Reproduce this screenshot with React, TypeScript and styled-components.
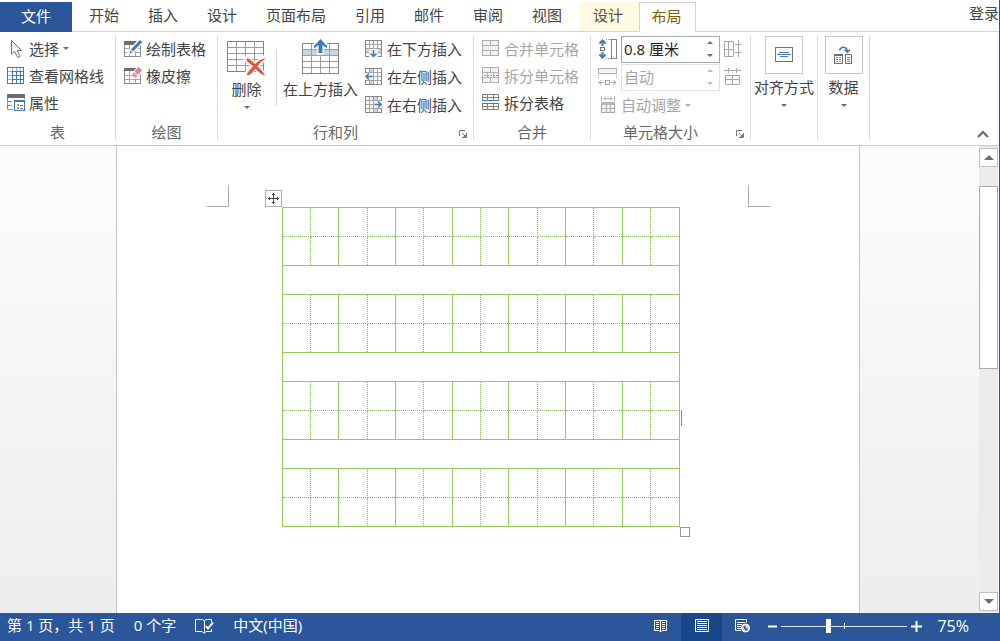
import React from "react";
import styled, { createGlobalStyle, css } from "styled-components";

const color = {
  brand: "#2b579a",
  brandDark: "#19478a",
  text: "#444444",
  label: "#666666",
  disabled: "#a6a6a6",
  line: "#d4d4d4",
  icon: "#6d6d6d",
  iconBlue: "#3f7cb5",
  grid: "#97c95c",
  gridDot: "#8cb868",
};

const GlobalStyle = createGlobalStyle`
  *, *::before, *::after { box-sizing: border-box; }
  body {
    margin: 0;
    font-family: "Open Sans", "Noto Sans CJK SC", sans-serif;
    font-size: 15px;
    line-height: 20px;
    color: ${color.text};
    background: #ffffff;
  }
  button, input { font: inherit; color: inherit; }
  button { padding: 0; border: 0; background: none; white-space: nowrap; }
  svg { display: block; flex: none; }
`;

/* ---------- shell ---------- */

const Window = styled.div`
  display: flex;
  flex-direction: column;
  height: 100vh;
  overflow: hidden;
`;

const Upper = styled.div`
  flex: 1;
  min-height: 0;
  display: flex;
  flex-direction: column;
  border-right: 1px solid ${color.brand};
`;

/* ---------- tabs ---------- */

const TabBar = styled.nav`
  display: flex;
  height: 32px;
  padding-top: 2px;
  border-bottom: 1px solid ${color.line};
`;

const FileTab = styled.button`
  width: 72px;
  height: 30px;
  padding-bottom: 2px;
  color: #ffffff;
  background: ${color.brand};
`;

const TabList = styled.div`
  display: flex;
  gap: 29px;
  padding: 0 18px 0 17px;
`;

const Tab = styled.button`
  padding-bottom: 3px;
`;

const ContextTab = styled.button<{ $active?: boolean }>`
  width: 59px;
  height: 29px;
  padding: 0 3px 3px 0;
  color: #5c5232;
  background: #fef9e3;
  ${(p) =>
    p.$active &&
    css`
      width: 57px;
      height: 30px;
      padding: 0 2px 4px 0;
      color: #806000;
      background: #ffffff;
      border: 1px solid ${color.line};
      border-bottom: 0;
    `}
`;

const SignIn = styled.a`
  margin-left: auto;
  line-height: 22px;
  color: inherit;
  text-decoration: none;
`;

/* ---------- ribbon ---------- */

const Ribbon = styled.div`
  display: grid;
  grid-template-columns: 116px 102px 256px 117px 160px 67px 52px 1fr;
  height: 114px;
  padding: 3px 0 5px;
  border-bottom: 1px solid #c8c8c8;
`;

const Group = styled.section`
  display: flex;
  flex-direction: column;
  justify-content: space-between;
  border-right: 1px solid #dcdcdc;
`;

const GroupBody = styled.div<{ $inset?: number }>`
  display: flex;
  padding-left: ${(p) => p.$inset ?? 8}px;
`;

const GroupFooter = styled.div<{ $launcher?: boolean }>`
  display: flex;
  align-items: center;
  height: 16px;
  padding-right: ${(p) => (p.$launcher ? 6 : 0)}px;
  color: ${color.label};
`;

const GroupLabel = styled.span`
  flex: 1;
  text-align: center;
  line-height: 16px;
`;

const Launcher = styled.button`
  display: flex;
  justify-content: flex-end;
  width: 14px;
  margin-top: 4px;
`;

const Stack = styled.div<{ $row: number }>`
  display: grid;
  grid-auto-rows: ${(p) => p.$row}px;
`;

const Command = styled.button`
  display: flex;
  align-items: center;
  gap: 4px;
  &:disabled {
    color: ${color.disabled};
  }
`;

const BigCommand = styled.button<{ $width: number }>`
  display: flex;
  flex-direction: column;
  align-items: center;
  width: ${(p) => p.$width}px;
  padding-top: 3px;
  > svg + span {
    margin-top: 3px;
    margin-bottom: 7px;
  }
`;

const ColumnRule = styled.div`
  width: 1px;
  height: 56px;
  margin: 15px 5px 0 9px;
  background: #dcdcdc;
`;

const PanelCommand = styled.button`
  display: flex;
  flex-direction: column;
  align-items: center;
  width: 100%;
  padding-top: 1px;
  > span {
    margin: 3px 0 7px;
  }
`;

const PanelIcon = styled.i`
  display: grid;
  place-items: center;
  width: 38px;
  height: 38px;
  border: 1px solid #c6c6c6;
`;

const SizeRow = styled.div`
  display: flex;
  align-items: center;
  gap: 4px;
`;

const Field = styled.label<{ $off?: boolean }>`
  display: flex;
  align-items: center;
  gap: 4px;
  color: ${(p) => (p.$off ? color.disabled : "#222222")};
`;

const FieldBox = styled.span<{ $off?: boolean }>`
  display: flex;
  align-items: center;
  width: 99px;
  height: 27px;
  padding: 0 6px 0 2px;
  border: 1px solid ${(p) => (p.$off ? "#e1e1e1" : "#ababab")};
`;

const FieldInput = styled.input`
  flex: 1;
  min-width: 0;
  padding: 0;
  border: 0;
  outline: 0;
  background: transparent;
`;

const Collapse = styled.button`
  align-self: end;
  justify-self: end;
  width: 13px;
  height: 13px;
  margin-right: 9px;
`;

/* ---------- document ---------- */

const Workspace = styled.main`
  flex: 1;
  min-height: 0;
  display: flex;
  padding-right: 1px;
`;

const Canvas = styled.div`
  flex: 1;
  display: flex;
  justify-content: center;
  padding-right: 4px;
  overflow: hidden;
  background: linear-gradient(#fdfdfd, #ededed);
`;

const Page = styled.article`
  width: 744px;
  border: solid #c6c6c6;
  border-width: 0 1px;
  background: #ffffff;
`;

const MarginMarks = styled.div`
  display: flex;
  justify-content: space-between;
  padding: 39px 89px 0 90px;
`;

const Mark = styled.span<{ $side: "left" | "right" }>`
  width: 22px;
  height: 22px;
  border-bottom: 1px solid #ababab;
  border-${(p) => (p.$side === "left" ? "right" : "left")}: 1px solid #ababab;
`;

const TableFrame = styled.div`
  position: relative;
  width: 398px;
  margin-left: 165px;
`;

const PracticeTable = styled.table`
  width: 398px;
  table-layout: fixed;
  border-collapse: collapse;
  border: 1px solid ${color.grid};
  tr {
    height: 29px;
  }
`;

const HalfCell = styled.td<{ $right: boolean; $lower: boolean }>`
  padding: 0;
  border: 1px solid ${color.grid};
  ${(p) => (p.$right ? "border-left" : "border-right")}: 1px dotted ${color.gridDot};
  ${(p) => (p.$lower ? "border-top" : "border-bottom")}: 1px dotted ${color.gridDot};
`;

const GapCell = styled.td`
  padding: 0;
  border: 1px solid ${color.grid};
`;

const MoveHandle = styled.button`
  position: absolute;
  left: -17px;
  top: -17px;
  display: grid;
  place-items: center;
  width: 17px;
  height: 17px;
  border: 1px solid #ababab;
  background: #ffffff;
`;

const ResizeHandle = styled.button`
  position: absolute;
  right: -10px;
  bottom: -10px;
  width: 10px;
  height: 10px;
  border: 1px solid #9a9a9a;
  background: #ffffff;
`;

const TextCaret = styled.span`
  position: absolute;
  right: -2px;
  top: 203px;
  width: 1px;
  height: 16px;
  background: #8a8a8a;
`;

const ScrollBar = styled.div`
  display: flex;
  flex-direction: column;
  width: 19px;
  padding: 2px 0;
  background: #ebebeb;
`;

const ScrollButton = styled.button`
  display: grid;
  place-items: center;
  height: 19px;
  border: 1px solid #c0c0c0;
  background: #ffffff;
`;

const ScrollTrack = styled.div`
  flex: 1;
  padding-top: 19px;
`;

const ScrollThumb = styled.div`
  height: 43%;
  min-height: 183px;
  border: 1px solid #ababab;
  background: #ffffff;
`;

/* ---------- status bar ---------- */

const StatusBar = styled.footer`
  display: flex;
  align-items: center;
  justify-content: space-between;
  height: 28px;
  padding: 0 31px 2px 7px;
  color: #ffffff;
  background: ${color.brand};
`;

const StatusInfo = styled.div`
  display: flex;
  align-items: center;
  gap: 19px;
  > span {
    padding-bottom: 2px;
  }
`;

const StatusTools = styled.div`
  display: flex;
  align-items: center;
`;

const ViewButton = styled.button<{ $active?: boolean }>`
  display: grid;
  place-items: center;
  width: 41px;
  height: 28px;
  margin-bottom: -2px;
  padding-bottom: 2px;
  background: ${(p) => (p.$active ? color.brandDark : "transparent")};
`;

const ZoomControl = styled.div`
  display: flex;
  align-items: center;
  gap: 4px;
  margin: 0 15px 0 5px;
`;

const ZoomTrack = styled.span`
  position: relative;
  display: flex;
  width: 126px;
  &::after {
    content: "";
    position: absolute;
    left: 50%;
    top: 4px;
    width: 1px;
    height: 6px;
    background: #ffffff;
  }
`;

const ZoomRange = styled.input`
  appearance: none;
  width: 100%;
  height: 14px;
  margin: 0;
  background: linear-gradient(#dfe6f0, #dfe6f0) center / 100% 1px no-repeat;
  &::-webkit-slider-thumb {
    appearance: none;
    width: 5px;
    height: 14px;
    background: #ffffff;
  }
`;

const ZoomValue = styled.span`
  padding-bottom: 1px;
  font-size: 16px;
`;

/* ---------- icons ---------- */

const Caret = ({ up, tone = color.icon, size = 3 }: { up?: boolean; tone?: string; size?: number }) => (
  <svg width={size * 2} height={size} viewBox="0 0 6 3">
    <path d={up ? "M0 3L3 0L6 3Z" : "M0 0H6L3 3Z"} fill={tone} />
  </svg>
);

const Svg = ({ w = 18, h = 18, children }: { w?: number; h?: number; children: React.ReactNode }) => (
  <svg width={w} height={h} viewBox={`0 0 ${w} ${h}`} fill="none">
    {children}
  </svg>
);

const PointerIcon = () => (
  <Svg>
    <path d="M4.5 0.5V14L7.6 11.3L10.7 17.500L13 16.500L10.3 10.5H14.500Z" fill="#fff" stroke={color.icon} />
  </Svg>
);

const GridlinesIcon = () => (
  <Svg>
    <rect x="0.5" y="0.5" width="16" height="16" stroke={color.icon} />
    <path d="M5.5 4V16M9.5 4V16M13.5 4V16M4 4.5H16M4 8.5H16M4 12.5H16" stroke={color.iconBlue} />
    <path d="M1 4.5H5M1 8.5H5M1 12.500H5M5.500 1V4M9.5 1V4M13.500 1V4" stroke="#9db8d2" />
  </Svg>
);

const PropertiesIcon = () => (
  <Svg>
    <path d="M0 0H18V4H0Z" fill={color.icon} />
    <path d="M0.5 4V15.5H6M1 7.5H5M1 11.5H5M17.5 4V5" stroke="#8b8b8b" />
    <rect x="7.5" y="6.5" width="10" height="10" fill="#fff" stroke={color.iconBlue} />
    <path d="M7 6H18V8H7Z" fill={color.iconBlue} />
    <path d="M10 10H12V12H10ZM10 13H12V15H10Z" fill="#c98b5d" />
    <path d="M13 11.5H16M13 14.5H16" stroke={color.icon} />
  </Svg>
);

const DrawTableIcon = () => (
  <Svg>
    <rect x="0.5" y="1.5" width="16" height="15" stroke="#8b8b8b" />
    <path d="M0 1H17V5H0Z" fill={color.icon} />
    <path d="M5.5 5V16M11.5 5V16M1 8.5H16M1 12.5H16" stroke="#a9a9a9" />
    <path d="M5 14L16.5 1.5" stroke="#fff" strokeWidth="6" />
    <path d="M8 10.5L17 1" stroke={color.iconBlue} strokeWidth="3" />
    <path d="M5.5 13.5L6.2 10.5L8.6 12.6Z" fill={color.iconBlue} />
  </Svg>
);

const EraserIcon = () => (
  <Svg>
    <rect x="0.5" y="1.5" width="16" height="15" stroke="#8b8b8b" />
    <path d="M0 1H17V4H0Z" fill={color.icon} />
    <path d="M5.5 4V16M11.5 4V16M1 8.5H16M1 12.5H16" stroke="#a9a9a9" />
    <path d="M7 7L15 -2L21 3L12 12Z" fill="#fff" />
    <path d="M10.500 4.500L14.5 0L18 3.300L14 8Z" fill="#e87d94" />
    <path d="M8 7.500L10 5.200L13.4 8.500L12 10.500H9.500Z" fill="#ee95a8" />
  </Svg>
);

const DeleteIcon = () => (
  <Svg w={39} h={38}>
    <rect x="0.5" y="3.5" width="36" height="30" stroke="#858585" />
    <path d="M9.5 4V33M18.5 4V33M27.5 4V33M1 9.5H36M1 15.5H36M1 21.5H36M1 27.5H36" stroke="#9d9d9d" />
    <path d="M18 19L38 38M38 19L18 38" stroke="#fff" strokeWidth="6" />
    <path d="M19 21.500C21 19 23 21 28 26C31 23 34 21 39 20C34 24 32 26 30.500 28.500C33 31 36 33 38 37.500C33 36 31 33 28.500 31C26 33 25 36 21 37.500C19 37 19.500 35 26 28.500C23 25.500 20 24 19 21.500Z" fill="#dc5939" />
  </Svg>
);

const InsertAboveIcon = () => (
  <Svg w={37} h={38}>
    <rect x="0.5" y="5.500" width="36" height="30" fill="#fff" stroke="#858585" />
    <path d="M1 12H36V18H1Z" fill="#c5d5e6" />
    <path d="M9.5 6V35M18.5 6V35M27.5 6V35M1 11.5H36M1 17.5H36M1 23.5H36M1 29.5H36" stroke="#9d9d9d" />
    <path d="M10 7L18.500 0L27 7V11H22V17H15V11H10Z" fill="#fff" />
    <path d="M12 8L18.500 1L25 8V10.500L20.500 7V15H16.500V7L12 10.500Z" fill={color.iconBlue} />
  </Svg>
);

const insertShapes = {
  below: {
    band: "M1 9H16V13H1Z",
    clear: "M4 9H13V18H4Z",
    arrow: "M8.500 10V16.500M5.500 13.500L8.500 16.500L11.500 13.500",
  },
  left: {
    band: "M5 1H9V16H5Z",
    clear: "M0 5H8V12H0Z",
    arrow: "M7.500 8.500H1M4 5.500L1 8.500L4 11.500",
  },
  right: {
    band: "M9 1H13V16H9Z",
    clear: "M9 5H18V12H9Z",
    arrow: "M9.500 8.500H16M13 5.500L16 8.500L13 11.500",
  },
};

const InsertIcon = ({ side }: { side: keyof typeof insertShapes }) => (
  <Svg>
    <rect x="0.5" y="0.5" width="16" height="16" stroke="#858585" />
    <path d={insertShapes[side].band} fill="#c5d5e6" />
    <path d="M4.500 1V16M8.500 1V16M12.500 1V16M1 4.500H16M1 8.500H16M1 12.500H16" stroke="#a3a3a3" />
    <path d={insertShapes[side].clear} fill="#eef3f8" />
    <path d={insertShapes[side].arrow} stroke={color.iconBlue} strokeWidth="1.500" />
  </Svg>
);

const MergeIcon = () => (
  <Svg>
    <rect x="0.5" y="0.5" width="16" height="15" fill="#f4eff4" stroke="#b2aab2" />
    <path d="M1 5.500H16M1 10.500H16M8.500 1V5M8.500 11V15" stroke="#b2aab2" />
  </Svg>
);

const SplitCellsIcon = () => (
  <Svg>
    <rect x="0.5" y="0.5" width="16" height="15" fill="#f4f1f4" stroke="#b2aeb2" />
    <path d="M1 5.500H16M1 10.500H16M8.500 1V5M8.500 11V15M5.500 6V10M11.500 6V10" stroke="#b2aeb2" />
    <path d="M2 8.500H16" stroke="#999" strokeDasharray="2 1" />
  </Svg>
);

const SplitTableIcon = () => (
  <Svg>
    <path d="M0.500 6V0.500H16.500V6M5.500 1V6M11.500 1V6M1 3.500H16M0.500 10V15.500H16.500V10M5.500 10V15M11.500 10V15M1 12.500H16" stroke="#808080" />
    <path d="M0 6.500H17M0 9.500H17" stroke={color.iconBlue} />
  </Svg>
);

const RowHeightIcon = () => (
  <Svg w={19} h={20}>
    <path d="M4.500 1V7M1.500 4.500L4.500 1.500L7.500 4.500M4.500 13V19M1.500 15.500L4.500 18.500L7.500 15.500" stroke={color.iconBlue} strokeWidth="2" />
    <rect x="2.500" y="8.500" width="4" height="3" stroke="#777" />
    <path d="M8 0.500H14M8 19.500H14" stroke="#888" strokeDasharray="1 1" />
    <rect x="13.500" y="0.500" width="5" height="19" stroke="#808080" />
  </Svg>
);

const ColumnWidthIcon = () => (
  <Svg w={19} h={20}>
    <rect x="0.500" y="1.500" width="18" height="5" fill="#f3f3f3" stroke="#b0b0b0" />
    <path d="M0.500 8V12M18.500 8V12" stroke="#b0b0b0" strokeDasharray="1 1" />
    <path d="M6 15.500H1M3.500 13L1 15.500L3.500 18M13 15.500H18M15.500 13L18 15.500L15.500 18" stroke="#a2a2a2" />
    <rect x="7.500" y="13.500" width="4" height="4" stroke="#a2a2a2" />
  </Svg>
);

const AutoFitIcon = () => (
  <Svg w={19} h={18}>
    <path d="M3.500 0V5M16.500 0V5M6 2.500H14M8 0.500L6 2.500L8 4.500M12 0.500L14 2.500L12 4.500" stroke="#b0b0b0" />
    <rect x="3.500" y="6.500" width="13" height="10" fill="#f0f0f0" stroke="#a6a6a6" />
    <path d="M3 6H17V9H3Z" fill="#b4b4b4" />
    <path d="M8.500 9V16M12.500 9V16M4 12.500H16" stroke="#b0b0b0" />
  </Svg>
);

const DistributeRowsIcon = () => (
  <Svg w={17}>
    <path d="M0.500 1.500H9.500V16.500H0.500ZM4.500 2V16M1 9.500H9M14.500 0V17M11 4.500H17M11 12.500H17" stroke="#a6a6a6" />
  </Svg>
);

const DistributeColumnsIcon = () => (
  <Svg w={17}>
    <path d="M1.500 7.500H15.500V16.500H1.500ZM8.500 8V16M2 11.500H15M0 2.500H17M4.500 0V5M12.500 0V5" stroke="#a6a6a6" />
  </Svg>
);

const AlignIcon = () => (
  <Svg w={18} h={16}>
    <rect x="0.500" y="0.500" width="17" height="14" stroke="#707070" />
    <path d="M4 5.500H14M2 7.500H16M5 9.500H13" stroke="#4b79bd" />
  </Svg>
);

const DataIcon = () => (
  <Svg w={19} h={18}>
    <path d="M5.500 4.500C7 0 12.500 0 13.500 5.500M10.500 3.500L13.500 6.500L16 3.500" stroke={color.iconBlue} strokeWidth="1.500" />
    <rect x="0.500" y="8.500" width="8" height="9" stroke="#707070" />
    <path d="M0 8H9V10H0Z" fill="#707070" />
    <path d="M2 11.500H4M5 11.500H7M2 13.500H4M5 13.500H7M2 15.500H4M5 15.500H7" stroke="#5b86b5" />
    <rect x="11.500" y="8.500" width="6" height="9" stroke="#707070" />
    <path d="M13 11.500H16M13 13.500H16M13 15.500H16" stroke="#5b86b5" />
  </Svg>
);

const LauncherIcon = () => (
  <Svg w={8} h={8}>
    <path d="M0.500 6V0.500H6M3 3L6.500 6.500M7.500 3V7.500H3" stroke="#777" />
    <path d="M4 7L7 4V7Z" fill="#777" />
  </Svg>
);

const MoveIcon = () => (
  <Svg w={11} h={11}>
    <path d="M5.500 0V11M0 5.500H11M4 2L5.500 0.500L7 2M4 9L5.500 10.500L7 9M2 4L0.500 5.500L2 7M9 4L10.500 5.500L9 7" stroke="#444" />
  </Svg>
);

const ProofIcon = () => (
  <Svg w={19} h={16}>
    <path d="M9 2.500C7 0.800 4 1.500 0.500 1.500V13.500H7L9 15.500L11 13.500H16.500V11M9.500 2.500V15M9.500 2.500C11 1.200 13 1.500 16.500 1.500V4" stroke="#fff" />
    <path d="M11 8L13 10.500L18 4.500" stroke="#fff" strokeWidth="2" />
  </Svg>
);

const ReadIcon = () => (
  <Svg w={14} h={14}>
    <path d="M6.500 1.500H0.500V11.500H5L6.500 13L8 11.500H12.500V1.500H6.500V13M2 3.500H5M2 5.500H5M2 7.500H5M2 9.500H5M8 3.500H11M8 5.500H11M8 7.500H11M8 9.500H11" stroke="#fff" />
  </Svg>
);

const PrintIcon = () => (
  <Svg w={14} h={14}>
    <path d="M0.500 0.500H13.500V12.500H0.500ZM2 2.500H12M2 4.500H12M2 6.500H12M2 8.500H12M2 10.500H12" stroke="#fff" />
  </Svg>
);

const WebIcon = () => (
  <Svg w={15} h={14}>
    <path d="M6 11.500H0.500V0.500H11.500V4M2 3.500H10M2 5.500H7M2 7.500H6M2 9.500H6" stroke="#fff" />
    <circle cx="10.500" cy="9" r="4" fill="#cfdcec" stroke="#fff" />
    <path d="M8 8L10 6.500L11 9L13 10L11 12Z" fill={color.brand} />
  </Svg>
);

/* ---------- data ---------- */

const tabs = ["开始", "插入", "设计", "页面布局", "引用", "邮件", "审阅", "视图"];
const halfColumns = Array.from({ length: 14 }, (_, i) => i);
const blocks = [0, 1, 2, 3];

const CharacterRow = ({ lower }: { lower: boolean }) => (
  <tr>
    {halfColumns.map((c) => (
      <HalfCell key={c} $right={c % 2 === 1} $lower={lower} />
    ))}
  </tr>
);

const Footer = ({ label, launcher }: { label: string; launcher?: boolean }) => (
  <GroupFooter $launcher={launcher}>
    <GroupLabel>{label}</GroupLabel>
    {launcher && (
      <Launcher aria-label={`${label}设置`}>
        <LauncherIcon />
      </Launcher>
    )}
  </GroupFooter>
);

const Spinner = ({ off }: { off?: boolean }) => (
  <svg width="6" height="16" viewBox="0 0 6 16">
    <path d="M0 3L3 0L6 3ZM0 13H6L3 16Z" fill={off ? "#bdbdbd" : color.icon} />
  </svg>
);

export default function App() {
  return (
    <Window>
      <GlobalStyle />
      <Upper>
        <TabBar>
          <FileTab>文件</FileTab>
          <TabList>
            {tabs.map((t) => (
              <Tab key={t}>{t}</Tab>
            ))}
          </TabList>
          <ContextTab>设计</ContextTab>
          <ContextTab $active>布局</ContextTab>
          <SignIn href="#">登录</SignIn>
        </TabBar>

        <Ribbon>
          <Group>
            <GroupBody $inset={7}>
              <Stack $row={27}>
                <Command><PointerIcon />选择<Caret /></Command>
                <Command><GridlinesIcon />查看网格线</Command>
                <Command><PropertiesIcon />属性</Command>
              </Stack>
            </GroupBody>
            <Footer label="表" />
          </Group>

          <Group>
            <GroupBody>
              <Stack $row={27}>
                <Command><DrawTableIcon />绘制表格</Command>
                <Command><EraserIcon />橡皮擦</Command>
              </Stack>
            </GroupBody>
            <Footer label="绘图" />
          </Group>

          <Group>
            <GroupBody>
              <BigCommand $width={41}>
                <DeleteIcon />
                <span>删除</span>
                <Caret />
              </BigCommand>
              <ColumnRule />
              <BigCommand $width={77}>
                <InsertAboveIcon />
                <span>在上方插入</span>
              </BigCommand>
              <GroupBody $inset={6}>
                <Stack $row={28}>
                  <Command><InsertIcon side="below" />在下方插入</Command>
                  <Command><InsertIcon side="left" />在左侧插入</Command>
                  <Command><InsertIcon side="right" />在右侧插入</Command>
                </Stack>
              </GroupBody>
            </GroupBody>
            <Footer label="行和列" launcher />
          </Group>

          <Group>
            <GroupBody>
              <Stack $row={27}>
                <Command disabled><MergeIcon />合并单元格</Command>
                <Command disabled><SplitCellsIcon />拆分单元格</Command>
                <Command><SplitTableIcon />拆分表格</Command>
              </Stack>
            </GroupBody>
            <Footer label="合并" />
          </Group>

          <Group>
            <GroupBody $inset={7}>
              <Stack $row={28}>
                <SizeRow>
                  <Field>
                    <RowHeightIcon />
                    <FieldBox>
                      <FieldInput aria-label="高度" defaultValue="0.8 厘米" />
                      <Spinner />
                    </FieldBox>
                  </Field>
                  <Command disabled aria-label="分布行"><DistributeRowsIcon /></Command>
                </SizeRow>
                <SizeRow>
                  <Field $off>
                    <ColumnWidthIcon />
                    <FieldBox $off>
                      <FieldInput aria-label="宽度" defaultValue="自动" disabled />
                      <Spinner off />
                    </FieldBox>
                  </Field>
                  <Command disabled aria-label="分布列"><DistributeColumnsIcon /></Command>
                </SizeRow>
                <Command disabled><AutoFitIcon />自动调整<Caret tone="#b0b0b0" /></Command>
              </Stack>
            </GroupBody>
            <Footer label="单元格大小" launcher />
          </Group>

          <Group>
            <PanelCommand>
              <PanelIcon><AlignIcon /></PanelIcon>
              <span>对齐方式</span>
              <Caret />
            </PanelCommand>
          </Group>

          <Group>
            <PanelCommand>
              <PanelIcon><DataIcon /></PanelIcon>
              <span>数据</span>
              <Caret />
            </PanelCommand>
          </Group>

          <Collapse aria-label="折叠功能区">
            <Svg w={12} h={8}>
              <path d="M1 7L6 2L11 7" stroke="#666" strokeWidth="2" />
            </Svg>
          </Collapse>
        </Ribbon>

        <Workspace>
          <Canvas>
            <Page>
              <MarginMarks>
                <Mark $side="left" />
                <Mark $side="right" />
              </MarginMarks>
              <TableFrame>
                <PracticeTable>
                  <tbody>
                    {blocks.map((b) => (
                      <React.Fragment key={b}>
                        <CharacterRow lower={false} />
                        <CharacterRow lower />
                        {b < blocks.length - 1 && (
                          <tr>
                            <GapCell colSpan={14} />
                          </tr>
                        )}
                      </React.Fragment>
                    ))}
                  </tbody>
                </PracticeTable>
                <MoveHandle aria-label="移动表格"><MoveIcon /></MoveHandle>
                <ResizeHandle aria-label="调整表格大小" />
                <TextCaret />
              </TableFrame>
            </Page>
          </Canvas>
          <ScrollBar>
            <ScrollButton aria-label="向上滚动"><Caret up size={5} /></ScrollButton>
            <ScrollTrack>
              <ScrollThumb />
            </ScrollTrack>
            <ScrollButton aria-label="向下滚动"><Caret size={5} /></ScrollButton>
          </ScrollBar>
        </Workspace>
      </Upper>

      <StatusBar>
        <StatusInfo>
          <span>第 1 页，共 1 页</span>
          <span>0 个字</span>
          <ProofIcon />
          <span>中文(中国)</span>
        </StatusInfo>
        <StatusTools>
          <ViewButton aria-label="阅读视图"><ReadIcon /></ViewButton>
          <ViewButton $active aria-label="页面视图"><PrintIcon /></ViewButton>
          <ViewButton aria-label="Web 版式视图"><WebIcon /></ViewButton>
          <ZoomControl>
            <button aria-label="缩小">
              <Svg w={9} h={11}><path d="M0 5.500H9" stroke="#fff" strokeWidth="2" /></Svg>
            </button>
            <ZoomTrack>
              <ZoomRange type="range" min={0} max={100} defaultValue={37} aria-label="显示比例" />
            </ZoomTrack>
            <button aria-label="放大">
              <Svg w={11} h={11}><path d="M0 5.500H11M5.500 0V11" stroke="#fff" strokeWidth="2" /></Svg>
            </button>
          </ZoomControl>
          <ZoomValue>75%</ZoomValue>
        </StatusTools>
      </StatusBar>
    </Window>
  );
}
